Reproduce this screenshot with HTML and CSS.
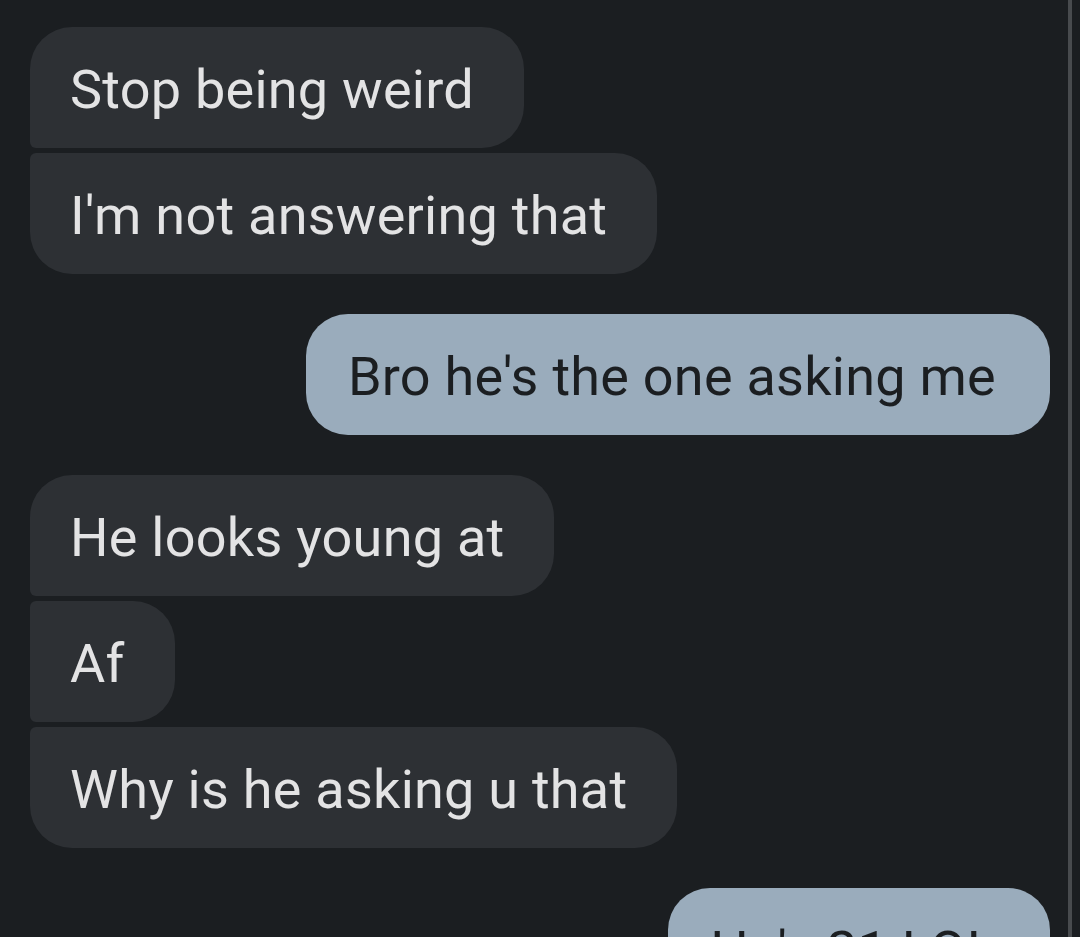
FILE: index.html
```html
<!DOCTYPE html>
<html lang="en">
<head>
<meta charset="utf-8">
<title>Chat</title>
<link rel="stylesheet" href="styles.css">
</head>
<body>
<main class="thread">
  <div class="group received">
    <div class="bubble first">Stop being weird</div>
    <div class="bubble last">I'm not answering that</div>
  </div>
  <div class="group sent">
    <div class="bubble">Bro he's the one asking me</div>
  </div>
  <div class="group received">
    <div class="bubble first">He looks young at</div>
    <div class="bubble middle">Af</div>
    <div class="bubble last">Why is he asking u that</div>
  </div>
  <div class="group sent">
    <div class="bubble">He's 21 LOL</div>
  </div>
</main>
<div class="scrollbar"></div>
</body>
</html>
```
FILE: styles.css
```css
html, body {
  margin: 0;
  padding: 0;
  background: #1b1e21;
  height: 100%;
  overflow: hidden;
}

.thread {
  display: flex;
  flex-direction: column;
  gap: 40px;
  padding: 27px 30px 0 30px;
  font-family: Roboto, "Noto Sans", sans-serif;
  font-size: 54px;
  letter-spacing: 0.25px;
}

.group {
  display: flex;
  flex-direction: column;
  gap: 5px;
}

.received {
  align-items: flex-start;
}

.sent {
  align-items: flex-end;
}

.bubble {
  height: 121px;
  box-sizing: border-box;
  line-height: 121px;
  padding: 2px 50px 0 40px;
  border-radius: 42px;
  white-space: nowrap;
}

.received .bubble {
  background: #2d3034;
  color: #e3e3e4;
}

.received .first {
  border-bottom-left-radius: 6px;
}

.received .middle {
  border-top-left-radius: 6px;
  border-bottom-left-radius: 6px;
}

.received .last {
  border-top-left-radius: 6px;
}

.sent .bubble {
  background: #9aacbc;
  color: #1b1e21;
  padding-left: 42px;
  padding-right: 54px;
}

.scrollbar {
  position: fixed;
  top: 0;
  bottom: 0;
  left: 1068px;
  width: 4px;
  background: #484b4e;
}
```
